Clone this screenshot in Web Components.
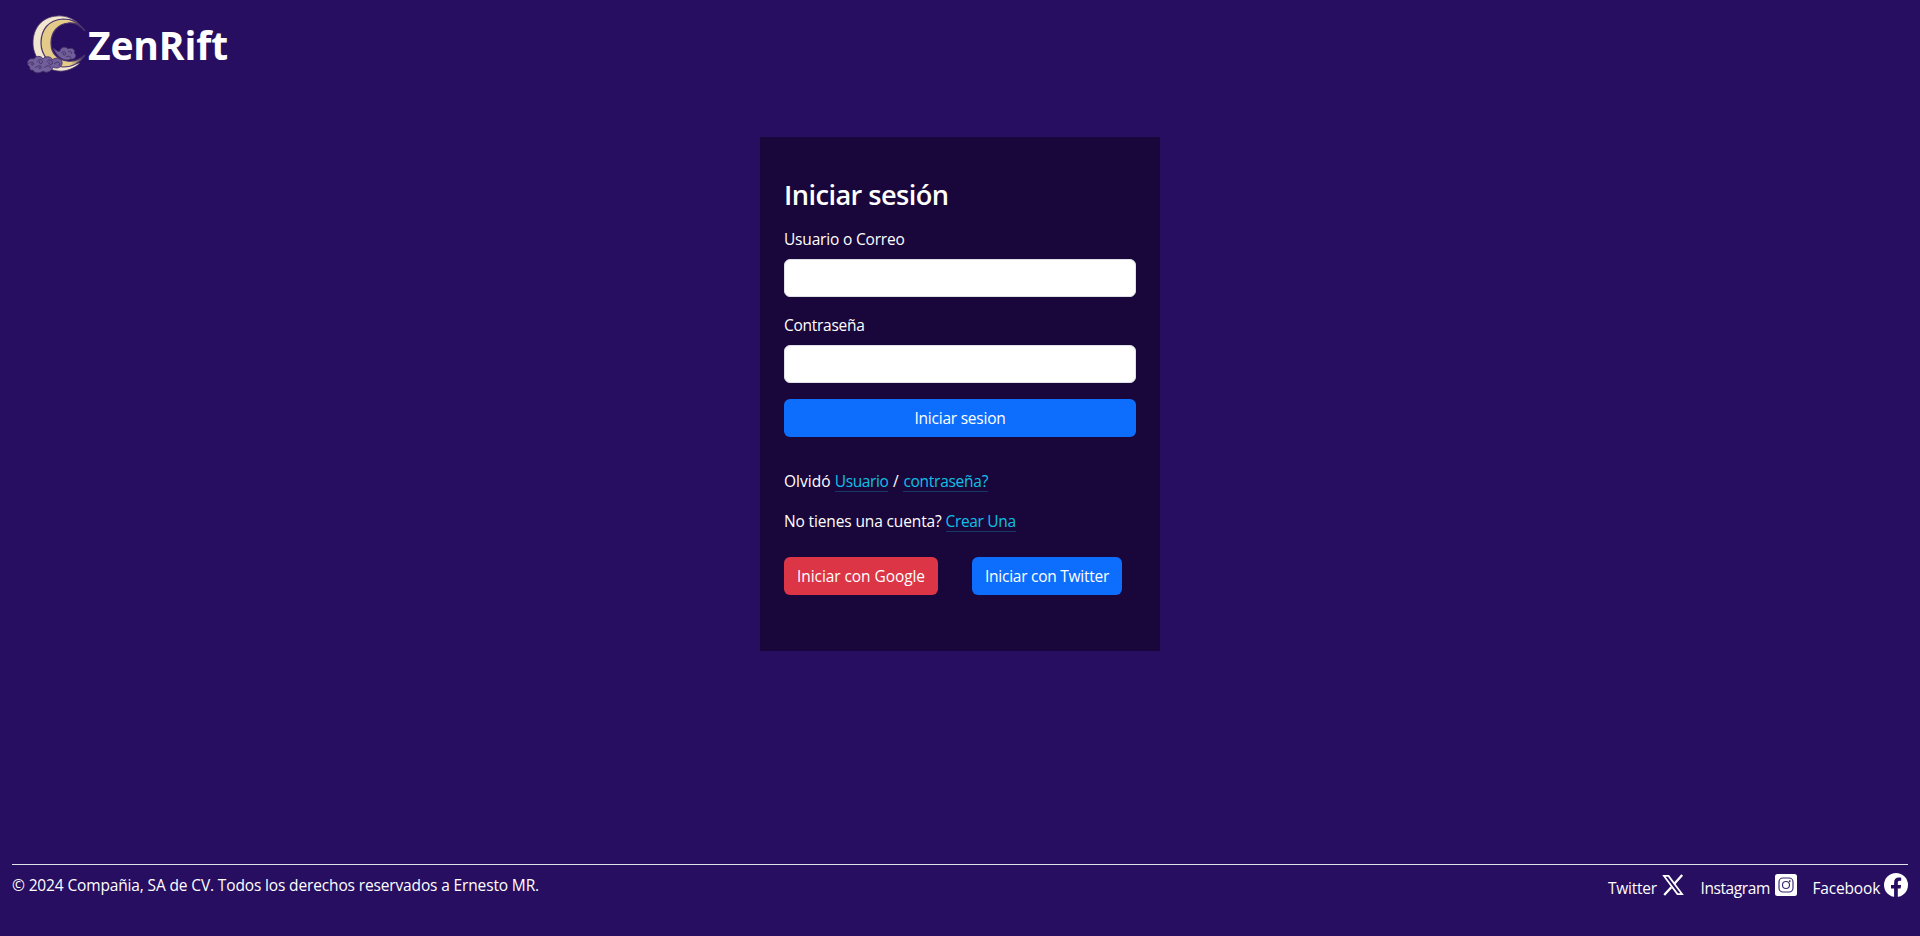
<!DOCTYPE html>
<html lang="es"><head><meta charset="utf-8"><title>ZenRift</title>
<style>
html,body{height:100%}
body{margin:0;background:#270e60;color:#fff;font:15.5px/24px "Open Sans","Noto Sans",sans-serif;overflow:hidden}
</style></head><body>
<zen-page></zen-page>
<script>
const define=(name,html,cls=HTMLElement)=>customElements.define(name,class extends cls{
  constructor(){super();this.attachShadow({mode:'open'}).innerHTML=html;}
});
/* Text set to a given advance width by tracking */
customElements.define('zen-text',class extends HTMLElement{
  constructor(){super();this.attachShadow({mode:'open'}).innerHTML='<style>:host{display:inline-block;white-space:pre}</style><span><slot></slot></span>';}
  connectedCallback(){
    const s=this.shadowRoot.querySelector('span'),w=+this.getAttribute('w'),n=this.textContent.length;
    const d=w-s.getBoundingClientRect().width;
    s.style.letterSpacing=(d/n).toFixed(4)+'px';
    this.style.width=w+'px';
  }
});
define('zen-header',`<style>:host{display:flex;height:90px;padding-left:26px;box-sizing:border-box}
zen-logo{margin-top:14px}h1{margin:17px 0 0 0;font-size:39px;line-height:56px;font-weight:700}</style>
<zen-logo></zen-logo><h1><zen-text w="140">ZenRift</zen-text></h1>`);
define('zen-logo',`<style>:host{display:block;width:62px;height:60px}svg{display:block}</style>
<svg width="62" height="60" viewBox="0 0 62 60" fill="none">
<defs><linearGradient id="t" x1="45" x2="60" y1="0" y2="0" gradientUnits="userSpaceOnUse"><stop stop-color="#e5cb89"/><stop offset=".75" stop-color="#685266"/><stop offset="1" stop-color="#49346b"/></linearGradient></defs>
<path d="M59 17C51 5 40 1 31 2C16 3 7 14 7 29C7 42 16 55 32 57C40 58 49 54 54 49L40 50C10 45 10 8 37 6C46 4 53 9 59 17Z" fill="#f2e6d1" stroke="#49346b" stroke-width=".8"/>
<path d="M59 17C51 7 45 5 37 5C22 6 15 16 15 29C15 41 24 52 37 53C47 53 54 49 59 41C53 46 47 48 41 47C30 45 25 39 25 29C25 18 32 10 42 9C48 8 54 11 59 17Z" fill="url(#t)" stroke="#49346b" stroke-width="1.2"/>
<g fill="#705f9b" stroke="#453069" stroke-width=".9">
<path d="M27 34C31 37 33 38 34 37C34 33 40 32 42 35C46 33 50 36 48 39C52 41 49 46 45 45C40 48 32 45 27 34Z"/>
<path d="M4 53C-1 50 2 43 8 45C10 41 16 42 17 45C19 41 27 43 26 46C31 42 37 45 36 50C35 54 30 55 27 53C25 59 19 59 17 57C13 60 8 59 7 56C5 57 3 55 4 53Z"/></g>
<path d="M2 50C5 47 9 48 7 51C5 52 5 49 7 49M11 48C13 44 18 46 16 49C14 51 12 48 14 47M21 48C23 44 28 47 26 50C23 52 22 48 24 48M28 50C32 46 35 49 33 52M9 54C12 51 16 51 15 54C13 56 12 53 14 53M18 54C20 51 26 51 24 54M35 39C38 36 41 39 39 41C37 42 37 39 38 39M42 38C44 36 47 38 45 40M40 43C43 41 46 43 44 44" fill="none" stroke="#453069" stroke-width=".9"/>
</svg>`);
define('zen-field',`<style>:host{display:block}label{display:block;margin-bottom:8px}
input{display:block;width:100%;height:38px;box-sizing:border-box;border:1px solid #dee2e6;border-radius:6px;background:#fff;padding:6px 12px;font:inherit}</style>
<label><slot></slot></label><input>`);
define('zen-button',`<style>:host{display:block}button{width:100%;height:38px;border:0;border-radius:6px;background:var(--button,#0d6efd);color:#fff;padding:0 13px;font:inherit;display:flex;align-items:center;justify-content:center}</style>
<button><slot></slot></button>`);
define('zen-link',`<style>:host{display:inline-block}a{display:block;height:22px;color:#0fc0e6;border-bottom:1px solid #173967}</style><a><slot></slot></a>`);
define('zen-login',`<style>:host{display:block;box-sizing:border-box;width:400px;height:514px;margin:47px auto 0;padding:41px 24px 0;background:#19073b}
h2{margin:0 0 15px;font-size:27.2px;line-height:34px;font-weight:600}
zen-field{margin-bottom:16px}p{display:flex;margin:0 0 16px;height:24px}.help{margin-top:32px}
.social{display:flex;gap:34px;margin-top:24px}.g{--button:#dc3545}</style>
<h2><zen-text w="164.5">Iniciar sesión</zen-text></h2>
<zen-field><zen-text w="120.7">Usuario o Correo</zen-text></zen-field>
<zen-field><zen-text w="80.5">Contraseña</zen-text></zen-field>
<zen-button><zen-text w="91">Iniciar sesion</zen-text></zen-button>
<p class="help"><zen-text w="50.8">Olvidó </zen-text><zen-link><zen-text w="53.7">Usuario</zen-text></zen-link><zen-text w="14.9"> / </zen-text><zen-link><zen-text w="84.7">contraseña?</zen-text></zen-link></p>
<p><zen-text w="161.5">No tienes una cuenta? </zen-text><zen-link><zen-text w="70.3">Crear Una</zen-text></zen-link></p>
<div class="social"><zen-button class="g"><zen-text w="128">Iniciar con Google</zen-text></zen-button><zen-button><zen-text w="124">Iniciar con Twitter</zen-text></zen-button></div>`);
define('zen-footer',`<style>:host{display:flex;justify-content:space-between;box-sizing:border-box;height:72px;margin:auto 12px 0;border-top:1px solid #dee2e6;padding-top:8px}
nav{display:flex;height:24px}nav>span{display:flex;align-items:flex-start}nav zen-text{margin-top:3px}svg{display:block;width:24px;height:24px}</style>
<zen-text class="copy" w="527">© 2024 Compañia, SA de CV. Todos los derechos reservados a Ernesto MR.</zen-text>
<nav>
<span style="margin-right:16px"><zen-text w="52.5">Twitter </zen-text><svg viewBox="0 0 24 24"><path d="M1.2 2H8L22.8 22H16ZM4.6 3.7 17 20.3h2.4L7 3.7Z" fill="#fff" fill-rule="evenodd"/><path d="M21.2 2 13.4 10.8M10.3 14.2 3.2 22" stroke="#fff" stroke-width="2.3" fill="none"/></svg></span>
<span style="margin-right:15px"><zen-text w="73">Instagram </zen-text><svg viewBox="0 0 24 24"><rect x="1" y="1" width="22" height="22" rx="2.5" fill="#fff"/><g fill="none" stroke="#3d2770" stroke-width="1.15"><rect x="5" y="5" width="14" height="14" rx="4"/><circle cx="12" cy="12" r="3.5"/></g><circle cx="15.8" cy="8.1" r=".9" fill="#270e60"/></svg></span>
<span><zen-text w="71.5">Facebook </zen-text><svg viewBox="0 0 24 24"><circle cx="12" cy="12" r="12" fill="#fff"/><path d="M10.1 24v-8.4H7V12h3.1V9.4C10.1 6.3 12 4.6 14.7 4.6c1.3 0 2.5.2 2.5.2v3h-1.5c-1.5 0-1.9.9-1.9 1.9V12h3.3l-.5 3.6h-2.8V24Z" fill="#270e60"/></svg></span>
</nav>`);
define('zen-page',`<style>:host{display:flex;flex-direction:column;height:936px}</style><zen-header></zen-header><zen-login></zen-login><zen-footer></zen-footer>`);
</script></body></html>
